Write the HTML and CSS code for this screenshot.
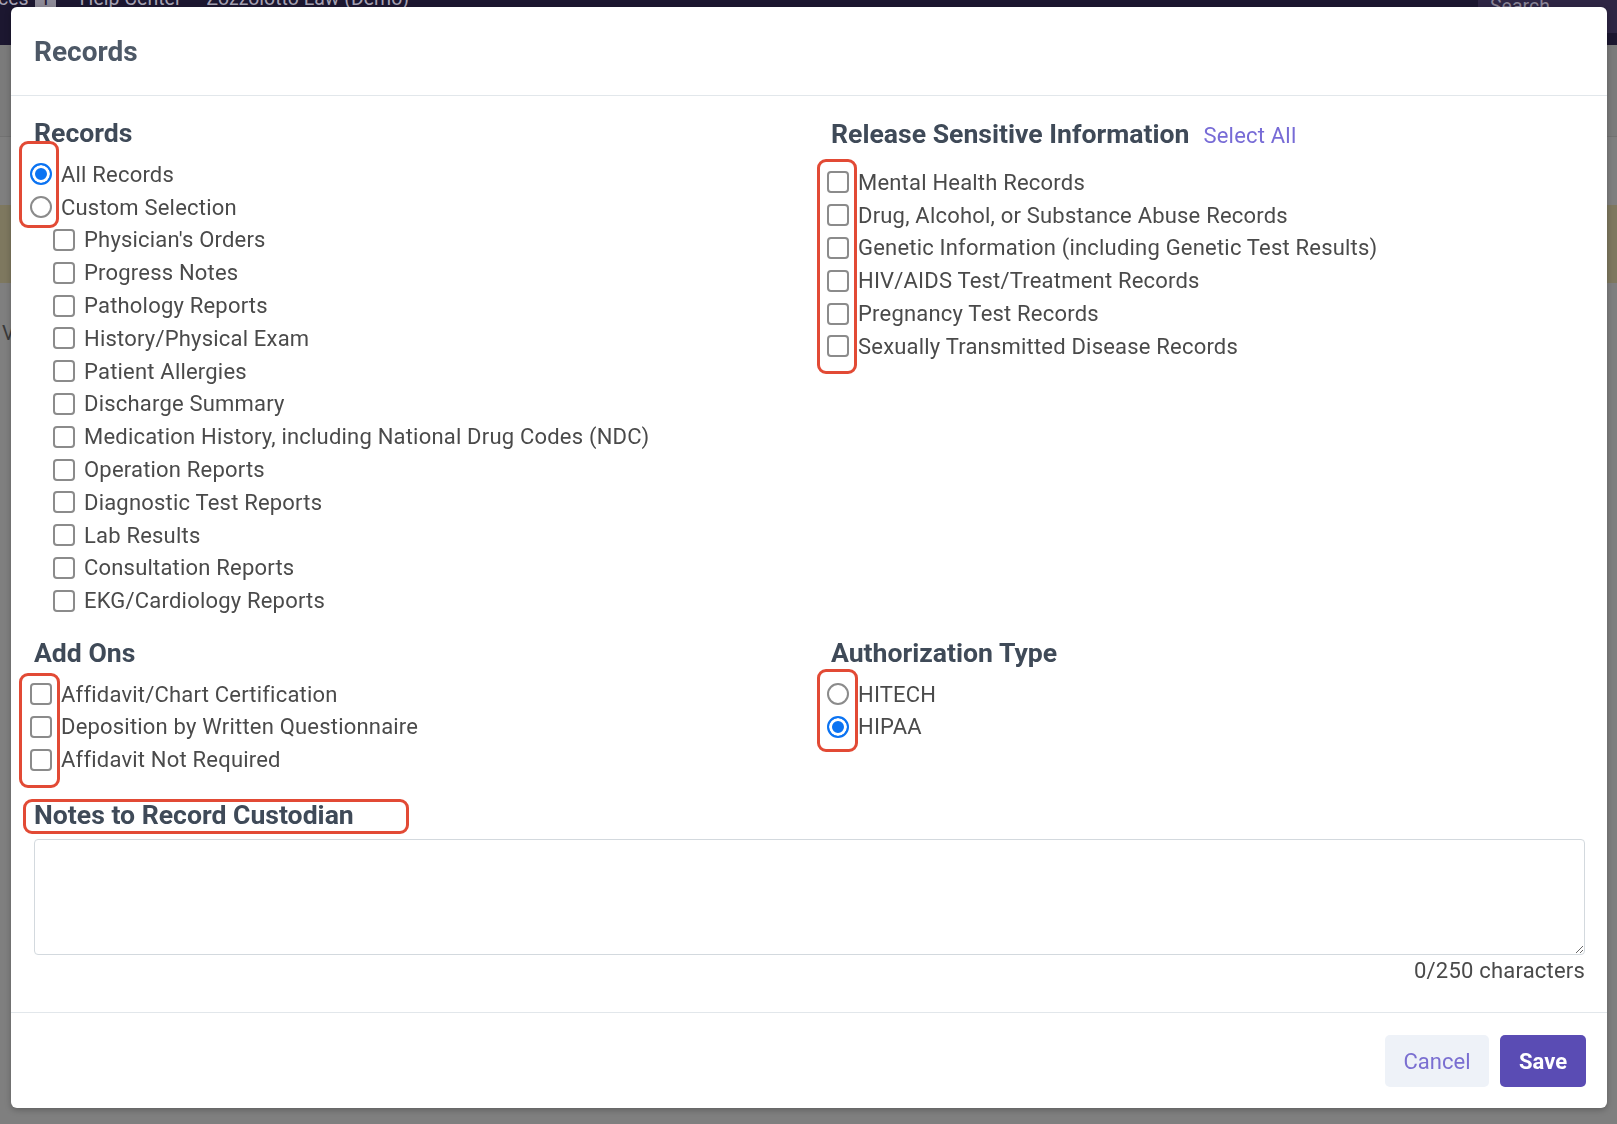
FILE: index.html
```html
<!DOCTYPE html>
<html lang="en">
<head>
<meta charset="utf-8">
<title>Records</title>
<link rel="stylesheet" href="styles.css">
</head>
<body>
<div class="page">
  <header class="topnav">
    <span class="nav-item">ces<span class="nav-badge">1</span></span>
    <span class="nav-item nav-help">Help Center</span>
    <span class="nav-item nav-firm">Zozzolotto Law (Demo)</span>
    <span class="nav-search">Search</span>
  </header>
  <div class="page-body">
    <div class="page-strip"></div>
    <div class="page-banner"></div>
    <div class="page-row">V</div>
  </div>
</div>

<div class="modal" role="dialog" aria-labelledby="modal-title">
  <div class="modal-header">
    <h2 class="modal-title" id="modal-title">Records</h2>
  </div>

  <div class="modal-body">
    <div class="fields">
      <section class="field">
        <h3 class="field-title">Records</h3>
        <div class="opts">
          <label class="opt"><input type="radio" name="scope" class="ctl ctl-radio" checked>All Records</label>
          <label class="opt"><input type="radio" name="scope" class="ctl ctl-radio">Custom Selection</label>
          <span class="mark mark-records"></span>
        </div>
        <div class="opts opts-sub">
          <label class="opt"><input type="checkbox" class="ctl ctl-check">Physician's Orders</label>
          <label class="opt"><input type="checkbox" class="ctl ctl-check">Progress Notes</label>
          <label class="opt"><input type="checkbox" class="ctl ctl-check">Pathology Reports</label>
          <label class="opt"><input type="checkbox" class="ctl ctl-check">History/Physical Exam</label>
          <label class="opt"><input type="checkbox" class="ctl ctl-check">Patient Allergies</label>
          <label class="opt"><input type="checkbox" class="ctl ctl-check">Discharge Summary</label>
          <label class="opt"><input type="checkbox" class="ctl ctl-check">Medication History, including National Drug Codes (NDC)</label>
          <label class="opt"><input type="checkbox" class="ctl ctl-check">Operation Reports</label>
          <label class="opt"><input type="checkbox" class="ctl ctl-check">Diagnostic Test Reports</label>
          <label class="opt"><input type="checkbox" class="ctl ctl-check">Lab Results</label>
          <label class="opt"><input type="checkbox" class="ctl ctl-check">Consultation Reports</label>
          <label class="opt"><input type="checkbox" class="ctl ctl-check">EKG/Cardiology Reports</label>
        </div>
      </section>

      <section class="field">
        <div class="field-head">
          <h3 class="field-title">Release Sensitive Information</h3>
          <a class="link" href="#">Select All</a>
        </div>
        <div class="opts">
          <label class="opt"><input type="checkbox" class="ctl ctl-check">Mental Health Records</label>
          <label class="opt"><input type="checkbox" class="ctl ctl-check">Drug, Alcohol, or Substance Abuse Records</label>
          <label class="opt"><input type="checkbox" class="ctl ctl-check">Genetic Information (including Genetic Test Results)</label>
          <label class="opt"><input type="checkbox" class="ctl ctl-check">HIV/AIDS Test/Treatment Records</label>
          <label class="opt"><input type="checkbox" class="ctl ctl-check">Pregnancy Test Records</label>
          <label class="opt"><input type="checkbox" class="ctl ctl-check">Sexually Transmitted Disease Records</label>
          <span class="mark mark-sensitive"></span>
        </div>
      </section>

      <section class="field">
        <h3 class="field-title">Add Ons</h3>
        <div class="opts">
          <label class="opt"><input type="checkbox" class="ctl ctl-check">Affidavit/Chart Certification</label>
          <label class="opt"><input type="checkbox" class="ctl ctl-check">Deposition by Written Questionnaire</label>
          <label class="opt"><input type="checkbox" class="ctl ctl-check">Affidavit Not Required</label>
          <span class="mark mark-addons"></span>
        </div>
      </section>

      <section class="field">
        <h3 class="field-title">Authorization Type</h3>
        <div class="opts">
          <label class="opt"><input type="radio" name="auth" class="ctl ctl-radio">HITECH</label>
          <label class="opt"><input type="radio" name="auth" class="ctl ctl-radio" checked>HIPAA</label>
          <span class="mark mark-auth"></span>
        </div>
      </section>
    </div>

    <div class="notes">
      <h3 class="field-title notes-title">Notes to Record Custodian<span class="mark mark-notes"></span></h3>
      <textarea class="notes-input" aria-label="Notes to Record Custodian"></textarea>
      <div class="char-count">0/250 characters</div>
    </div>
  </div>

  <div class="modal-footer">
    <button class="btn btn-cancel" type="button">Cancel</button>
    <button class="btn btn-save" type="button">Save</button>
  </div>
</div>
</body>
</html>
```

FILE: styles.css
```css
* { box-sizing: border-box; }

html, body {
  margin: 0;
  height: 100%;
}

body {
  background: #7f7f7f;
  font-family: Roboto, "Liberation Sans", Arial, sans-serif;
  overflow: hidden;
}

/* ---------- page behind the dialog ---------- */
.page {
  height: 100%;
  display: flex;
  flex-direction: column;
}

.topnav {
  height: 45px;
  background: #1c1730;
  display: flex;
  align-items: flex-start;
  color: #a6a2b3;
  font-size: 19.5px;
  line-height: 20px;
  overflow: hidden;
}

.nav-item {
  margin-top: -11px;
  white-space: nowrap;
}

.nav-item:first-child { margin-left: -2px; }

.nav-badge {
  display: inline-block;
  background: #8d8a97;
  color: #1c1730;
  padding: 0 5px;
  margin-left: 6px;
  border-radius: 2px;
}

.nav-help { margin-left: 24px; }
.nav-firm { margin-left: 25px; }

.nav-search {
  margin-left: auto;
  width: 139px;
  height: 33px;
  background: #2e2644;
  color: #8a8597;
  padding: 0 12px;
  line-height: 14px;
}

.page-body {
  flex: 1;
  display: flex;
  flex-direction: column;
}

.page-strip {
  height: 92px;
  background: #7b7b7b;
  border-bottom: 1px solid #727272;
}

.page-banner {
  margin-top: 68px;
  height: 78px;
  background: #7e785f;
}

.page-row {
  margin-top: 38px;
  padding-left: 2px;
  color: #3a3a3a;
  font-size: 20px;
}

/* ---------- dialog ---------- */
.modal {
  position: fixed;
  top: 7px;
  left: 11px;
  width: 1596px;
  height: 1101px;
  background: #fff;
  border-radius: 6px;
  box-shadow: 0 2px 6px rgba(0, 0, 0, 0.25);
  display: flex;
  flex-direction: column;
}

.modal-header {
  height: 89px;
  padding: 28px 23px 0;
  border-bottom: 1px solid #e2e7eb;
}

.modal-title {
  margin: 0;
  font-size: 28px;
  line-height: 34px;
  font-weight: 700;
  color: #4d5866;
}

.modal-body {
  flex: 1;
  padding: 21px 22px 0 23px;
}

.fields {
  display: grid;
  grid-template-columns: 1fr 1fr;
  column-gap: 43px;
  row-gap: 19.5px;
}

.field-title {
  margin: 0 0 9px;
  font-size: 26.6px;
  line-height: 32px;
  font-weight: 700;
  color: #3f4a58;
}

.field-head {
  display: flex;
  align-items: baseline;
  gap: 14px;
  padding-top: 1px;
  margin-bottom: 16px;
}

.field-head .field-title { margin: 0; }

.link {
  font-size: 22px;
  letter-spacing: 0.2px;
  color: #776bd6;
  text-decoration: none;
}

.opts {
  position: relative;
  display: flex;
  flex-direction: column;
}

.opts-sub { padding-left: 23px; }

.opt {
  height: 32.8px;
  display: flex;
  align-items: center;
  gap: 9px;
  margin-left: -4px;
  font-size: 22px;
  letter-spacing: 0.2px;
  color: #4a4a4a;
  white-space: nowrap;
}

/* form controls */
.ctl {
  appearance: none;
  -webkit-appearance: none;
  flex: none;
  width: 22px;
  height: 22px;
  margin: 0;
  background: #fff;
  border: 2px solid #8b8b8b;
}

.ctl-check { border-radius: 4px; }

.ctl-radio { border-radius: 50%; }

.ctl-radio:checked {
  border-color: #0b73f2;
  background: #0b73f2;
  box-shadow: inset 0 0 0 3px #fff;
}

/* annotation outlines drawn over the screenshot */
.mark {
  position: absolute;
  border: 3px solid #e24a35;
  border-radius: 9px;
  pointer-events: none;
}

.mark-records  { left: -15px; top: -17px; width: 40px; height: 87px; }
.mark-sensitive{ left: -14px; top: -7px;  width: 40px; height: 215px; }
.mark-addons   { left: -15px; top: -5px;  width: 41px; height: 115px; }
.mark-auth     { left: -14px; top: -9px;  width: 41px; height: 83px; }
.mark-notes    { left: -11px; top: 0;     width: 386px; height: 35px; }

/* notes */
.notes { margin-top: 22.5px; }

.notes-title {
  position: relative;
  margin-bottom: 8px;
}

.notes-input {
  display: block;
  width: 100%;
  height: 116px;
  border: 1px solid #d3d9de;
  border-radius: 4px;
  background: #fff;
  font: inherit;
  resize: vertical;
}

.char-count {
  margin-top: 3.5px;
  text-align: right;
  font-size: 22px;
  line-height: 26px;
  letter-spacing: 0.2px;
  color: #4a4a4a;
}

/* footer */
.modal-footer {
  height: 96px;
  border-top: 1px solid #e2e7eb;
  padding: 22px 21px 0 0;
  display: flex;
  justify-content: flex-end;
  align-items: flex-start;
  gap: 11px;
}

.btn {
  height: 52px;
  border: 0;
  border-radius: 5px;
  font-family: inherit;
  font-size: 22px;
  cursor: pointer;
}

.btn-cancel {
  width: 104px;
  background: #eef2f8;
  color: #7a6fd1;
}

.btn-save {
  width: 86px;
  background: #5a4cb4;
  color: #fff;
  font-weight: 700;
}
```
